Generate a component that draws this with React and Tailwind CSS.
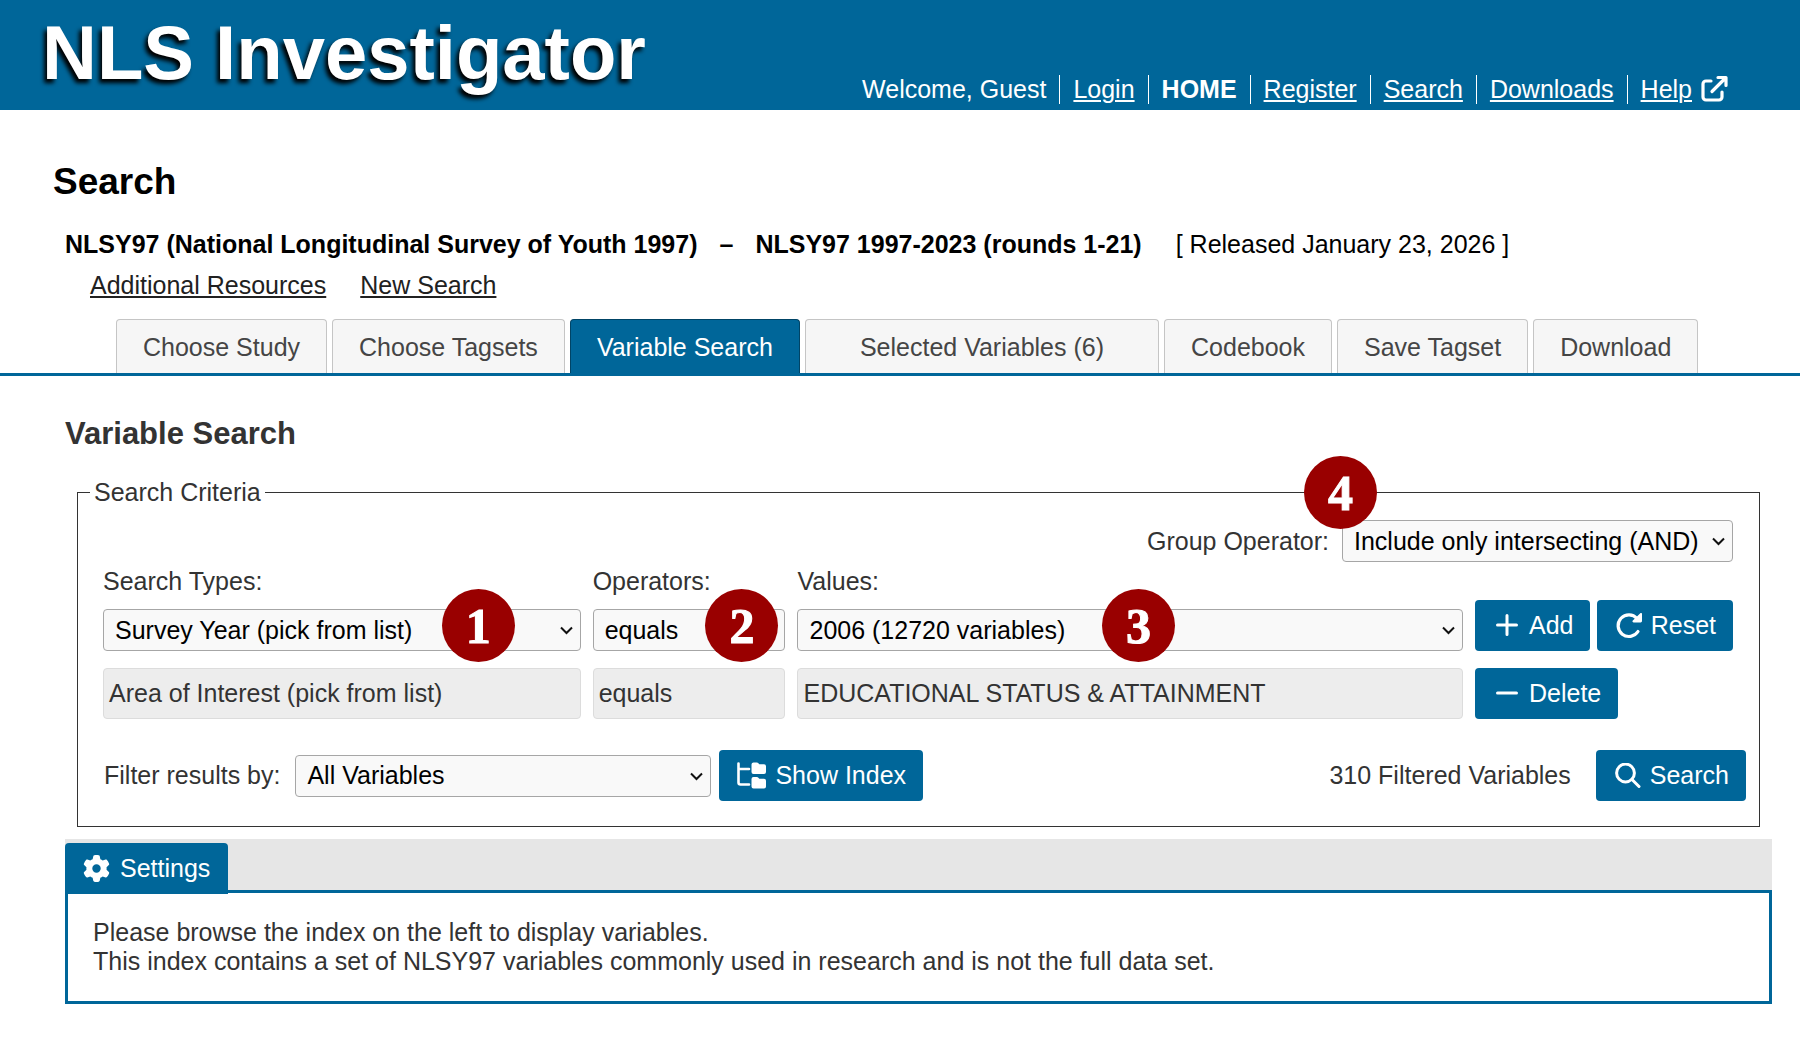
import { useState } from "react";
import { FaGear } from "react-icons/fa6";

const NAV_LINKS = ["Login", "HOME", "Register", "Search", "Downloads"];

const TABS = [
  { label: "Choose Study" },
  { label: "Choose Tagsets" },
  { label: "Variable Search" },
  { label: "Selected Variables (6)", wide: true },
  { label: "Codebook" },
  { label: "Save Tagset" },
  { label: "Download" },
];

export default function App() {
  const [tab, setTab] = useState("Variable Search");

  return (
    <div className="min-h-screen bg-white font-['Liberation_Sans',Arial,sans-serif] text-[25px] leading-[29px] text-[#333]">
      <Header />

      <main>
        <h1 className="mt-[51px] ml-[53px] text-[37px] leading-[42px] font-bold text-black">
          Search
        </h1>

        <div className="mt-[27px] ml-[65px] flex flex-wrap gap-x-[22px] text-black">
          <strong>NLSY97 (National Longitudinal Survey of Youth 1997)</strong>
          <strong>–</strong>
          <strong>NLSY97 1997-2023 (rounds 1-21)</strong>
          <span className="ml-3">[ Released January 23, 2026 ]</span>
        </div>

        <div className="mt-3 ml-[90px] flex gap-[34px] text-[#212121]">
          <a href="#resources" className="underline decoration-2 underline-offset-2">
            Additional Resources
          </a>
          <a href="#new" className="underline decoration-2 underline-offset-2">
            New Search
          </a>
        </div>

        {/* Tabs */}
        <nav className="mt-[19px] flex gap-[5px] border-b-[3px] border-[#006699] pl-[116px]">
          {TABS.map((t) => (
            <button
              key={t.label}
              type="button"
              onClick={() => setTab(t.label)}
              className={`rounded-t-[4px] border border-b-0 pt-[13px] pb-[11px] whitespace-nowrap ${
                t.wide ? "px-[54px]" : "px-[26px]"
              } ${
                tab === t.label
                  ? "border-[#004466] bg-[#006699] text-white"
                  : "border-[#c5c5c5] bg-[#f6f6f6] text-[#454545]"
              }`}
            >
              {t.label}
            </button>
          ))}
        </nav>

        <div className="mr-7 ml-[65px]">
          <h2 className="mt-10 text-[31px] leading-9 font-bold">Variable Search</h2>
          <SearchCriteria />
          <SettingsPanel />
        </div>
      </main>
    </div>
  );
}

function Header() {
  return (
    <header className="flex items-end justify-between bg-[#006699] pr-[72px] pl-[42px] text-white">
      <div className="pb-1 text-[76px] leading-[106px] font-bold whitespace-nowrap [text-shadow:-3px_4px_4px_#000]">
        NLS Investigator
      </div>

      <nav className="flex pb-[6px] whitespace-nowrap">
        <span className="pr-[13px]">Welcome, Guest</span>
        {NAV_LINKS.map((name) => (
          <span key={name} className="border-l border-white px-[13px]">
            <a
              href={`#${name.toLowerCase()}`}
              className={
                name === "HOME" ? "font-bold" : "underline decoration-2 underline-offset-2"
              }
            >
              {name}
            </a>
          </span>
        ))}
        <span className="flex gap-[9px] border-l border-white pl-[13px]">
          <a href="#help" className="underline decoration-2 underline-offset-2">
            Help
          </a>
          <ExternalIcon />
        </span>
      </nav>
    </header>
  );
}

function SearchCriteria() {
  return (
    <fieldset className="mx-3 mt-[26px] border border-[#333] pr-[13px] pb-[25px] pl-3">
      <legend className="px-1">Search Criteria</legend>

      <div className="px-[13px] pt-[13px]">
        <div className="flex items-center justify-end gap-[13px]">
          <label htmlFor="group-op">Group Operator:</label>
          <div className="relative w-[391px]">
            <Select id="group-op" options={["Include only intersecting (AND)", "Include all (OR)"]} />
            <Badge n={4} className="-top-16 -left-[38px]" />
          </div>
        </div>

        <div className="mt-[5px] grid grid-cols-[minmax(0,478fr)_minmax(0,193fr)_minmax(0,666fr)_258px] items-end gap-x-3">
          <label htmlFor="search-type">Search Types:</label>
          <label htmlFor="operator">Operators:</label>
          <label htmlFor="value">Values:</label>
          <span />

          <div className="relative">
            <Select id="search-type" options={["Survey Year (pick from list)", "Area of Interest (pick from list)"]} />
            <Badge n={1} className="-top-5 right-[66px]" />
          </div>
          <div className="relative">
            <Select id="operator" options={["equals", "not equals"]} />
            <Badge n={2} className="-top-5 right-[7px]" />
          </div>
          <div className="relative">
            <Select id="value" options={["2006 (12720 variables)"]} />
            <Badge n={3} className="-top-5 right-72" />
          </div>
          <div className="mt-1 flex justify-between">
            <Button icon={<PlusIcon />}>Add</Button>
            <Button icon={<ResetIcon />}>Reset</Button>
          </div>

          <ReadOnly>Area of Interest (pick from list)</ReadOnly>
          <ReadOnly>equals</ReadOnly>
          <ReadOnly>EDUCATIONAL STATUS &amp; ATTAINMENT</ReadOnly>
          <div className="mt-[17px] flex">
            <Button icon={<MinusIcon />}>Delete</Button>
          </div>
        </div>
      </div>

      <div className="mt-[31px] flex items-center pl-[14px]">
        <label htmlFor="filter">Filter results by:</label>
        <div className="relative mr-2 ml-[15px] w-[416px]">
          <Select id="filter" options={["All Variables"]} />
        </div>
        <Button icon={<TreeIcon />}>Show Index</Button>
        <span className="mr-[25px] ml-auto">310 Filtered Variables</span>
        <Button icon={<SearchIcon />}>Search</Button>
      </div>
    </fieldset>
  );
}

function SettingsPanel() {
  return (
    <section className="mt-3">
      <div className="flex h-[51px] bg-[#e6e6e6] pt-1">
        <button
          type="button"
          className="z-10 flex h-[51px] items-center gap-[10px] rounded-t-[4px] bg-[#006699] px-[18px] text-white"
        >
          <FaGear className="size-[27px]" />
          Settings
        </button>
      </div>
      <div className="border-[3px] border-[#006699] p-[25px]">
        <p>Please browse the index on the left to display variables.</p>
        <p>
          This index contains a set of NLSY97 variables commonly used in research and is not the
          full data set.
        </p>
      </div>
    </section>
  );
}

function Select({ id, options }) {
  return (
    <>
      <select
        id={id}
        className="block h-[42px] w-full appearance-none rounded-[4px] border border-[#a6a6a6] bg-[#f9f9f9] pl-[11px] text-black"
      >
        {options.map((o) => (
          <option key={o}>{o}</option>
        ))}
      </select>
      <svg
        className="pointer-events-none absolute right-2 bottom-[16px]"
        width="13"
        height="9"
        viewBox="0 0 13 9"
        fill="none"
        stroke="#111"
        strokeWidth="2"
      >
        <path d="M1 1.5l5.5 5.5L12 1.5" />
      </svg>
    </>
  );
}

function ReadOnly({ children }) {
  return (
    <div className="mt-[17px] truncate rounded-[4px] border border-[#dcdcdc] bg-[#ededed] px-[5px] py-[10px]">
      {children}
    </div>
  );
}

function Button({ icon, children }) {
  return (
    <button
      type="button"
      className="flex h-[51px] items-center gap-[9px] rounded-[4px] bg-[#006699] pr-[17px] pl-[18px] whitespace-nowrap text-white"
    >
      {icon}
      {children}
    </button>
  );
}

// Numbered callout
function Badge({ n, className }) {
  return (
    <span
      className={`absolute z-10 flex size-[73px] items-center justify-center rounded-full bg-[#990000] font-['Liberation_Serif',serif] text-[50px] leading-none font-bold text-white [-webkit-text-stroke:1px_white] ${className}`}
    >
      {n}
    </span>
  );
}

function ExternalIcon() {
  return (
    <svg width="27" height="27" viewBox="0 0 27 27" fill="none" stroke="#fff" strokeWidth="3.2" strokeLinecap="round">
      <path d="M10 6H5a3 3 0 0 0-3 3v13a3 3 0 0 0 3 3h13a3 3 0 0 0 3-3v-5" />
      <path d="M17 2.5h8v8M24.5 3L11 16.5" strokeLinejoin="round" />
    </svg>
  );
}

function PlusIcon() {
  return (
    <svg width="27" height="26" viewBox="0 0 27 26" stroke="#fff" strokeWidth="3" strokeLinecap="round">
      <path d="M14 2.500v19M4.500 12h19" />
    </svg>
  );
}

function MinusIcon() {
  return (
    <svg width="27" height="26" viewBox="0 0 27 26" stroke="#fff" strokeWidth="3" strokeLinecap="round">
      <path d="M4.500 12h19" />
    </svg>
  );
}

function ResetIcon() {
  return (
    <svg width="27" height="26" viewBox="-1 1 27 26" fill="none">
      <path d="M21 6.500A10.800 10.800 0 1 0 22 19.500" stroke="#fff" strokeWidth="3.200" strokeLinecap="round" />
      <path d="M24.300 1.300l-7.500 7.200c-.700.800-.300 1.900.8 1.900h7.100c.7 0 1.300-.6 1.300-1.300V2c0-1-.9-1.400-1.700-.7z" fill="#fff" />
    </svg>
  );
}

function TreeIcon() {
  return (
    <svg width="29" height="27" viewBox="0 0 29 27" fill="none">
      <path d="M1.5 1.5v19a2 2 0 0 0 2 2H12M1.5 7H12" stroke="#fff" strokeWidth="2.6" strokeLinecap="round" />
      <path
        d="M16.5.5h3.2c.8 0 1.3.2 1.7.7l.9 1h4.700a2 2 0 0 1 2 2V10a2 2 0 0 1-2 2H16.500a2 2 0 0 1-2-2V2.500a2 2 0 0 1 2-2zM16.500 15h3.200c.8 0 1.300.2 1.700.7l.9 1h4.700a2 2 0 0 1 2 2v5.800a2 2 0 0 1-2 2H16.500a2 2 0 0 1-2-2V17a2 2 0 0 1 2-2z"
        fill="#fff"
      />
    </svg>
  );
}

function SearchIcon() {
  return (
    <svg width="27" height="26" viewBox="-1 0 27 26" fill="none" stroke="#fff" strokeWidth="3">
      <circle cx="10.5" cy="10" r="8.900" />
      <path d="M17 16.500l7 7" strokeLinecap="round" />
    </svg>
  );
}
